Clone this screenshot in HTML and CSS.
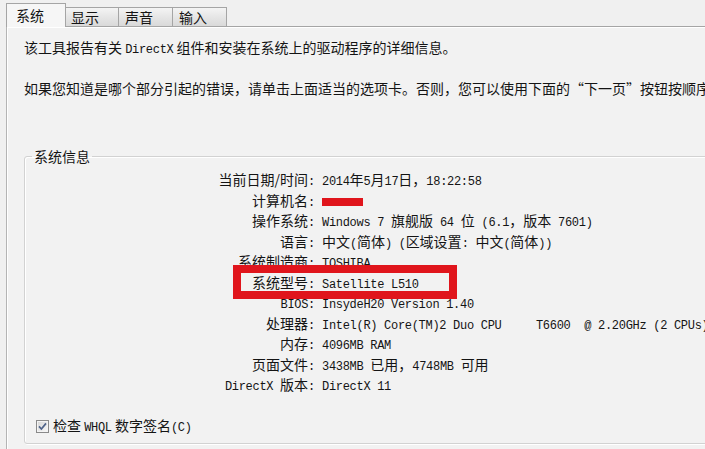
FILE: index.html
```html
<!DOCTYPE html>
<html lang="zh-CN">
<head>
  <meta charset="UTF-8" />
  <title>DirectX 诊断工具</title>
  <link rel="stylesheet" href="styles.css">
</head>
<body>
  <div class="window">
    <div class="tabs">
      <div class="tab active">系统</div>
      <div class="tab">显示</div>
      <div class="tab">声音</div>
      <div class="tab">输入</div>
    </div>

    <div class="panel">
      <p class="intro first">该工具报告有关 <span class="m">DirectX</span> 组件和安装在系统上的驱动程序的详细信息。</p>
      <p class="intro">如果您知道是哪个部分引起的错误，请单击上面适当的选项卡。否则，您可以使用下面的“下一页”按钮按顺序查看每一页。</p>

      <!-- system info group -->
      <fieldset class="group">
        <legend>系统信息</legend>
        <div class="info">
          <div class="k">当前日期/时间<span class="m">:</span></div>
          <div class="v"><span class="m">2014</span>年<span class="m">5</span>月<span class="m">17</span>日，<span class="m">18:22:58</span></div>

          <div class="k">计算机名<span class="m">:</span></div>
          <div class="v"><span class="redacted"></span></div>

          <div class="k">操作系统<span class="m">:</span></div>
          <div class="v"><span class="m">Windows 7 </span>旗舰版<span class="m"> 64 </span>位<span class="m"> (6.1</span>，版本<span class="m"> 7601)</span></div>

          <div class="k">语言<span class="m">:</span></div>
          <div class="v">中文<span class="m">(</span>简体<span class="m">) (</span>区域设置<span class="m">: </span>中文<span class="m">(</span>简体<span class="m">))</span></div>

          <div class="k">系统制造商<span class="m">:</span></div>
          <div class="v"><span class="m">TOSHIBA</span></div>

          <div class="k">系统型号<span class="m">:</span></div>
          <div class="v"><span class="m">Satellite L510</span></div>

          <div class="k"><span class="m">BIOS:</span></div>
          <div class="v"><span class="m">InsydeH20 Version 1.40</span></div>

          <div class="k">处理器<span class="m">:</span></div>
          <div class="v"><span class="m">Intel(R) Core(TM)2 Duo CPU     T6600  @ 2.20GHz (2 CPUs), ~2.2GHz</span></div>

          <div class="k">内存<span class="m">:</span></div>
          <div class="v"><span class="m">4096MB RAM</span></div>

          <div class="k">页面文件<span class="m">:</span></div>
          <div class="v"><span class="m">3438MB </span>已用，<span class="m">4748MB </span>可用</div>

          <div class="k"><span class="m">DirectX </span>版本<span class="m">:</span></div>
          <div class="v"><span class="m">DirectX 11</span></div>

          <div class="mark"></div>
        </div>

        <label class="check">
          <svg width="13" height="13" viewBox="0 0 13 13">
            <defs>
              <linearGradient id="cb" x1="0" y1="0" x2="1" y2="1">
                <stop offset="0" stop-color="#d8d8d8"/>
                <stop offset="1" stop-color="#f6f6f6"/>
              </linearGradient>
            </defs>
            <rect x="0.5" y="0.5" width="12" height="12" fill="#f4f4f4" stroke="#8a8a8a"/>
            <rect x="2" y="2" width="9" height="9" fill="url(#cb)"/>
            <path d="M3 6.4 L5.4 9 L10 3.4" fill="none" stroke="#4f6389" stroke-width="1.7"/>
          </svg>
          <span>检查 <span class="m">WHQL</span> 数字签名<span class="m">(C)</span></span>
        </label>
      </fieldset>
    </div>
  </div>
</body>
</html>
```

FILE: styles.css
```css
html, body {
  margin: 0;
  overflow: hidden;
}
body {
  background: #f0f0f0;
  color: #141414;
  font-family: "Noto Sans CJK SC", "Noto Sans", sans-serif;
  font-size: 14px;
}
.window {
  width: 780px;
  height: 449px;
  overflow: hidden;
}
.m {
  font-family: "Liberation Mono", "DejaVu Sans Mono", monospace;
  font-size: 12px;
  letter-spacing: -0.3px;
  white-space: pre;
}

/* tabs */
.tabs {
  display: flex;
  align-items: flex-end;
  height: 26px;
  padding-left: 6px;
}
.tab {
  box-sizing: border-box;
  width: 55px;
  height: 19px;
  margin-left: -1px;
  padding-left: 6px;
  line-height: 18px;
  border: 1px solid #a5a5a5;
  border-bottom: 0;
  background: linear-gradient(#f4f4f4, #e6e6e6 50%, #d9d9d9);
}
.tab.active {
  position: relative;
  z-index: 1;
  width: 60px;
  height: 24px;
  margin-left: 0;
  margin-right: -1px;
  margin-bottom: -1px;
  padding-left: 9px;
  line-height: 22px;
  background: #f6f6f6;
}

/* panel */
.panel {
  border-top: 1px solid #a5a5a5;
  border-left: 1px solid #b4b4b4;
  margin-left: 6px;
  padding: 10px 0 0 17px;
  background: #f2f2f2;
  box-shadow: inset 1px 1px #fff;
  height: 420px;
}
.intro {
  margin: 0;
  line-height: 20px;
  white-space: nowrap;
}
.intro.first {
  margin-bottom: 18px;
}

/* group box */
.group {
  margin: 48px 0 0 0;
  padding: 3px 7px 5px 7px;
  border: 1px solid #d2d2d2;
  border-radius: 3px;
  box-shadow: inset 1px 1px #fff, 1px 1px #fff;
}
.group legend {
  padding: 0 2px;
  line-height: 20px;
}
.info {
  position: relative;
  display: grid;
  grid-template-columns: 283px 1fr;
  column-gap: 7px;
  grid-auto-rows: 20.5px;
  align-items: center;
}
.k {
  text-align: right;
  white-space: nowrap;
}
.v {
  white-space: nowrap;
}
.redacted {
  display: inline-block;
  width: 41px;
  height: 8px;
  background: #e0151c;
  vertical-align: middle;
}
.mark {
  position: absolute;
  left: 201px;
  top: 96px;
  width: 224px;
  height: 34px;
  box-sizing: border-box;
  border: 8px solid #e0151c;
}

.check {
  display: flex;
  align-items: center;
  gap: 4px;
  margin: 20px 0 0 4px;
  line-height: 20px;
}
.check svg {
  display: block;
}
```
